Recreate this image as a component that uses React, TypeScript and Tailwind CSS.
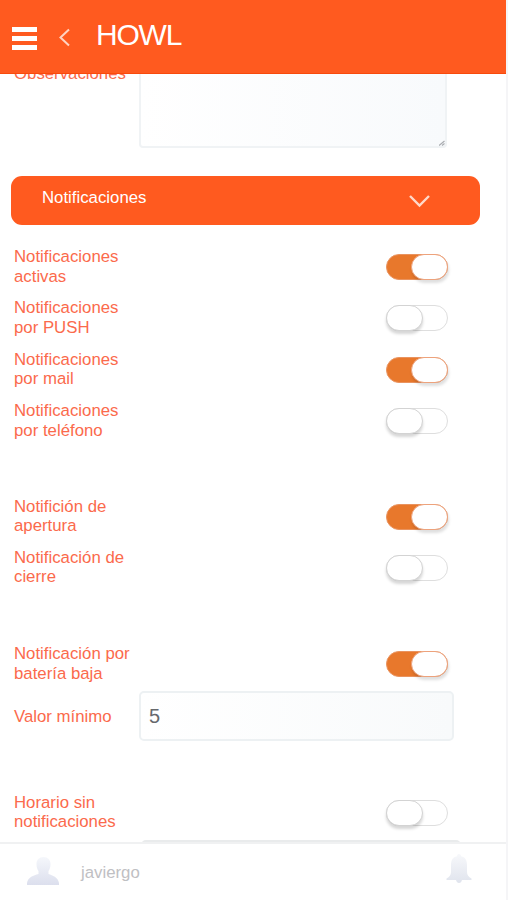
import React from 'react';

interface ToggleRowProps {
  first: string;
  second: string;
  on?: boolean;
}

const Toggle: React.FC<{ on?: boolean }> = ({ on }) => (
  <button
    role="switch"
    aria-checked={!!on}
    className={`mt-px flex h-[26px] w-[62px] shrink-0 rounded-full border ${
      on ? 'justify-end border-[#e9935f] bg-[#e8782c]' : 'justify-start border-[#dedede] bg-white'
    }`}
  >
    <span
      className={`-m-px h-[26px] w-[37px] rounded-full border bg-white ${
        on
          ? 'border-[#eda27c] shadow-[1px_3px_3px_rgba(0,0,0,0.13)]'
          : 'border-[#d3d3d3] shadow-[0px_3px_3px_rgba(0,0,0,0.16)]'
      }`}
    />
  </button>
);

const ToggleRow: React.FC<ToggleRowProps> = ({ first, second, on }) => (
  <div className="flex h-[51.3px] items-center justify-between pl-[14px] pr-[58px]">
    <span className="text-[16.8px] leading-[19.5px] text-[#fb6a4c]">
      {first}
      <br />
      {second}
    </span>
    <Toggle on={on} />
  </div>
);

const App: React.FC = () => {
  const alerts: ToggleRowProps[] = [
    { first: 'Notificaciones', second: 'activas', on: true },
    { first: 'Notificaciones', second: 'por PUSH' },
    { first: 'Notificaciones', second: 'por mail', on: true },
    { first: 'Notificaciones', second: 'por teléfono' },
  ];

  return (
    <div className="h-[900px] w-[508px] overflow-hidden border-r-2 border-[#f5f5f7] bg-white font-['Liberation_Sans',Arial,sans-serif]">
      <div className="flex h-full flex-col">
        {/* Header */}
        <header className="flex h-[74px] shrink-0 items-start border-b border-[#f84a0c] bg-[#ff5a1f] text-white">
          <button aria-label="Menu" className="ml-[12px] mt-[27px] flex w-[25px] flex-col gap-[4px]">
            <span className="h-[5px] bg-white" />
            <span className="h-[5px] bg-white" />
            <span className="h-[5px] bg-white" />
          </button>
          <button aria-label="Back" className="ml-[21px] mt-[28px]">
            <svg width="13" height="19" viewBox="0 0 13 19" fill="none" stroke="#ffd3c2" strokeWidth="2">
              <path d="M11 1.5 2.5 9.5 11 17.5" />
            </svg>
          </button>
          <h1 className="ml-[25px] mt-[17px] text-[30px] leading-[36px] tracking-[-1.2px]">HOWL</h1>
        </header>

        {/* Form */}
        <main className="min-h-0 flex-1 overflow-hidden">
          <div className="flex h-[74px] items-start pl-[14px]">
            <span className="-mt-[10px] w-[125px] text-[16.8px] leading-[19.5px] text-[#fb6a4c]">Observaciones</span>
            <div className="flex h-[74px] w-[308px] items-end justify-end rounded-b-[4px] border-2 border-t-0 border-[#f0f3f5] bg-linear-to-r from-white to-[#f8fafc]">
              <svg width="6" height="6" viewBox="0 0 6 6" stroke="#a9acb0" strokeWidth="1.2">
                <path d="M0 5.5 5.5 1M3 5.5 5.5 3.5" />
              </svg>
            </div>
          </div>

          <div className="ml-[11px] mt-[28px] flex h-[49px] w-[469px] items-start justify-between rounded-[11px] bg-[#ff5a1f] pl-[31px] pr-[49px] text-white">
            <span className="mt-[12px] text-[16.8px] leading-[20px]">Notificaciones</span>
            <svg className="mt-[18px]" width="23" height="14" viewBox="0 0 23 14" fill="none" stroke="#ffd9ca" strokeWidth="2.4">
              <path d="M2 2 11.5 11.5 21 2" />
            </svg>
          </div>

          <div className="mt-[16px]">
            {alerts.map((row) => (
              <ToggleRow key={row.second} {...row} />
            ))}
          </div>

          <div className="mt-[44.3px]">
            <ToggleRow first="Notifición de" second="apertura" on />
            <ToggleRow first="Notificación de" second="cierre" />
          </div>

          <div className="mt-[45px]">
            <ToggleRow first="Notificación por" second="batería baja" on />
            <div className="mt-[2px] flex h-[50px] items-center pl-[14px]">
              <label htmlFor="min" className="w-[125px] text-[16.8px] leading-[19.5px] text-[#fb6a4c]">
                Valor mínimo
              </label>
              <input
                id="min"
                defaultValue="5"
                className="h-[50px] w-[315px] rounded-[5px] border-2 border-[#edf1f3] bg-linear-to-r from-white to-[#f8fafb] px-[8px] text-[20px] text-[#66696d] outline-none"
              />
            </div>
          </div>

          <div className="mt-[45px]">
            <ToggleRow first="Horario sin" second="notificaciones" />
            <div className="ml-[141px] mt-[2.5px] h-[48px] w-[320px] rounded-[5px] border-2 border-[#e9ebec]" />
          </div>
        </main>

        {/* Footer */}
        <footer className="flex h-[58px] shrink-0 items-start border-t-2 border-[#f0f1f2] bg-white">
          <svg className="ml-[27px] mt-[12px]" width="33" height="30" viewBox="0 0 33 30">
            <defs>
              <linearGradient id="userFill" x1="0" y1="0" x2="0" y2="1">
                <stop offset="0" stopColor="#f5f7fb" />
                <stop offset="1" stopColor="#dcdfed" />
              </linearGradient>
            </defs>
            <path
              fill="url(#userFill)"
              d="M16.500 1c-4.500 0-7 3-7 7 0 3 .8 5.500 2 7v3c-5 1.500-10.500 3-11.500 9v2h32v-2c-1-6-6.500-7.500-10.500-9v-3c1.200-1.500 2-4 2-7 0-4-2.500-7-7-7z"
            />
          </svg>
          <span className="ml-[21px] mt-[19px] text-[16.8px] leading-[20px] text-[#bfc0c3]">javiergo</span>
          <svg className="ml-auto mr-[34px] mt-[9px]" width="26" height="31" viewBox="0 0 26 31">
            <defs>
              <linearGradient id="bellFill" x1="0" y1="0" x2="0" y2="1">
                <stop offset="0" stopColor="#f7f8fb" />
                <stop offset="1" stopColor="#e0e4ed" />
              </linearGradient>
            </defs>
            <path
              fill="url(#bellFill)"
              d="M13 1c-1.500 0-2 1-2 2.200C6.500 4 5 7.500 5 12v7c0 3-1.500 5-4.500 6.500V27H10c.5 2 1.500 3 3 3s2.500-1 3-3h9.500v-1.500C22.500 24 21 22 21 19v-7c0-4.500-1.500-8-6-8.800C15 2 14.500 1 13 1z"
            />
          </svg>
        </footer>
      </div>
    </div>
  );
};

export default App;
